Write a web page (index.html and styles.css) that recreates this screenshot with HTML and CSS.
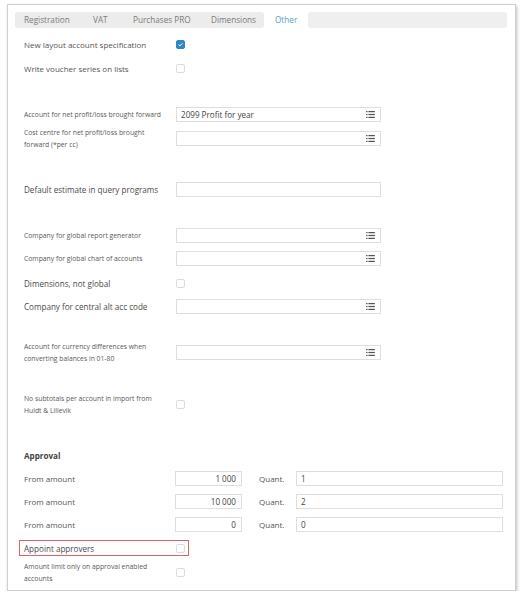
FILE: index.html
```html
<!DOCTYPE html>
<html>
<head>
<meta charset="utf-8">
<link rel="stylesheet" href="styles.css">
</head>
<body>
<div class="card">
  <div class="tabs">
    <div class="tabgroup">
      <span class="tab t-reg">Registration</span>
      <span class="tab t-vat">VAT</span>
      <span class="tab t-pur">Purchases PRO</span>
      <span class="tab t-dim">Dimensions</span>
    </div>
    <span class="tab active">Other</span>
    <div class="tabfill"></div>
  </div>

  <div class="row first">
    <span class="lbl md">New layout account specification</span>
    <span class="cb checked"><svg viewBox="0 0 10 10" width="9" height="9"><path d="M2.3 5.2 L4.2 7 L7.8 3.2" fill="none" stroke="#fff" stroke-width="1.4"/></svg></span>
  </div>
  <div class="row g1">
    <span class="lbl md">Write voucher series on lists</span>
    <span class="cb"></span>
  </div>

  <div class="row gap2">
    <span class="lbl sm">Account for net profit/loss brought forward</span>
    <div class="inp wide"><span class="val">2099 Profit for year</span><svg class="ico" viewBox="0 0 10 8" width="9" height="7"><rect x="0" y="0" width="1.6" height="1.4"/><rect x="2.6" y="0" width="7.4" height="1.4"/><rect x="0" y="3.3" width="1.6" height="1.4"/><rect x="2.6" y="3.3" width="7.4" height="1.4"/><rect x="0" y="6.6" width="1.6" height="1.4"/><rect x="2.6" y="6.6" width="7.4" height="1.4"/></svg></div>
  </div>
  <div class="row tall">
    <span class="lbl sm two">Cost centre for net profit/loss brought forward (*per cc)</span>
    <div class="inp wide"><span class="val"></span><svg class="ico" viewBox="0 0 10 8" width="9" height="7"><rect x="0" y="0" width="1.6" height="1.4"/><rect x="2.6" y="0" width="7.4" height="1.4"/><rect x="0" y="3.3" width="1.6" height="1.4"/><rect x="2.6" y="3.3" width="7.4" height="1.4"/><rect x="0" y="6.6" width="1.6" height="1.4"/><rect x="2.6" y="6.6" width="7.4" height="1.4"/></svg></div>
  </div>

  <div class="row gap3">
    <span class="lbl lg">Default estimate in query programs</span>
    <div class="inp wide"></div>
  </div>

  <div class="row gap2">
    <span class="lbl sm">Company for global report generator</span>
    <div class="inp wide"><span class="val"></span><svg class="ico" viewBox="0 0 10 8" width="9" height="7"><rect x="0" y="0" width="1.6" height="1.4"/><rect x="2.6" y="0" width="7.4" height="1.4"/><rect x="0" y="3.3" width="1.6" height="1.4"/><rect x="2.6" y="3.3" width="7.4" height="1.4"/><rect x="0" y="6.6" width="1.6" height="1.4"/><rect x="2.6" y="6.6" width="7.4" height="1.4"/></svg></div>
  </div>
  <div class="row">
    <span class="lbl sm">Company for global chart of accounts</span>
    <div class="inp wide"><span class="val"></span><svg class="ico" viewBox="0 0 10 8" width="9" height="7"><rect x="0" y="0" width="1.6" height="1.4"/><rect x="2.6" y="0" width="7.4" height="1.4"/><rect x="0" y="3.3" width="1.6" height="1.4"/><rect x="2.6" y="3.3" width="7.4" height="1.4"/><rect x="0" y="6.6" width="1.6" height="1.4"/><rect x="2.6" y="6.6" width="7.4" height="1.4"/></svg></div>
  </div>
  <div class="row g2">
    <span class="lbl lg">Dimensions, not global</span>
    <span class="cb"></span>
  </div>
  <div class="row">
    <span class="lbl lg">Company for central alt acc code</span>
    <div class="inp wide"><span class="val"></span><svg class="ico" viewBox="0 0 10 8" width="9" height="7"><rect x="0" y="0" width="1.6" height="1.4"/><rect x="2.6" y="0" width="7.4" height="1.4"/><rect x="0" y="3.3" width="1.6" height="1.4"/><rect x="2.6" y="3.3" width="7.4" height="1.4"/><rect x="0" y="6.6" width="1.6" height="1.4"/><rect x="2.6" y="6.6" width="7.4" height="1.4"/></svg></div>
  </div>

  <div class="row gap2b tall">
    <span class="lbl sm two">Account for currency differences when converting balances in 01-80</span>
    <div class="inp wide"><span class="val"></span><svg class="ico" viewBox="0 0 10 8" width="9" height="7"><rect x="0" y="0" width="1.6" height="1.4"/><rect x="2.6" y="0" width="7.4" height="1.4"/><rect x="0" y="3.3" width="1.6" height="1.4"/><rect x="2.6" y="3.3" width="7.4" height="1.4"/><rect x="0" y="6.6" width="1.6" height="1.4"/><rect x="2.6" y="6.6" width="7.4" height="1.4"/></svg></div>
  </div>

  <div class="row gap3b tall">
    <span class="lbl sm two">No subtotals per account in import from Huldt &amp; Lillevik</span>
    <span class="cb"></span>
  </div>

  <div class="row gap4 headrow">
    <span class="lbl head">Approval</span>
  </div>
  <div class="row">
    <span class="lbl md">From amount</span>
    <div class="inp amt">1 000</div>
    <span class="quant">Quant.</span>
    <div class="inp qty">1</div>
  </div>
  <div class="row">
    <span class="lbl md">From amount</span>
    <div class="inp amt">10 000</div>
    <span class="quant">Quant.</span>
    <div class="inp qty">2</div>
  </div>
  <div class="row">
    <span class="lbl md">From amount</span>
    <div class="inp amt">0</div>
    <span class="quant">Quant.</span>
    <div class="inp qty">0</div>
  </div>
  <div class="row hl-row">
    <span class="lbl lg">Appoint approvers</span>
    <span class="cb"></span>
    <div class="highlight"></div>
  </div>
  <div class="row tall last">
    <span class="lbl sm two">Amount limit only on approval enabled accounts</span>
    <span class="cb"></span>
  </div>
</div>
</body>
</html>
```

FILE: styles.css
```css
html, body {
  margin: 0;
  padding: 0;
  background: #ffffff;
}
body {
  font-family: "Open Sans", "Noto Sans", sans-serif;
  color: #555;
}
.card {
  margin: 4px 0 0 7px;
  width: 509px;
  height: 587px;
  box-sizing: border-box;
  border: 1px solid #cfcfcf;
  box-shadow: 1px 2px 3px rgba(0,0,0,0.25);
  padding: 7px 8px 0 7px;
  background: #fff;
}
.tabs {
  display: flex;
  height: 16px;
}
.tabgroup {
  display: flex;
  align-items: center;
  background: #ececec;
  border-radius: 3px;
  width: 249px;
  height: 16px;
  padding-left: 9px;
  box-sizing: border-box;
}
.tab {
  font-size: 8.2px;
  color: #7a7a7a;
  line-height: 16px;
  flex: none;
}
.t-reg { width: 69px; }
.t-vat { width: 40px; }
.t-pur { width: 78px; }
.t-dim { width: auto; }
.tab.active {
  width: 44px;
  box-sizing: border-box;
  padding-left: 11px;
  color: #5b9fc5;
}
.tabfill {
  flex: 1;
  background: #efefef;
  border-radius: 3px;
  height: 16px;
}
.row {
  display: flex;
  align-items: center;
  height: 23px;
  padding-left: 9px;
  position: relative;
}
.row.first { margin-top: 5px; }
.row.tall { height: 25px; }
.row.g1 { margin-top: 1px; }
.row.g2 { margin-top: 2px; }
.row.gap2 { margin-top: 23px; }
.row.gap2b { margin-top: 22px; }
.row.gap3 { margin-top: 27px; }
.row.gap3b { margin-top: 27px; }
.row.gap4 { margin-top: 26px; }
.row.headrow { height: 24px; }
.lbl {
  width: 152px;
  flex: none;
  color: #555;
}
.lbl.lg { font-size: 8.1px; color: #4a4a4a; }
.lbl.md { font-size: 8px; color: #555; }
.lbl.sm { font-size: 6.8px; color: #5a5a5a; line-height: 12px; }
.lbl.two { width: 130px; margin-right: 22px; }
.lbl.head { font-size: 8.1px; font-weight: bold; color: #444; }
.cb {
  width: 9px;
  height: 9px;
  box-sizing: border-box;
  border: 1px solid #dcdcdc;
  border-radius: 2px;
  background: #fff;
  display: flex;
  align-items: center;
  justify-content: center;
}
.cb.checked {
  background: #2f87c4;
  border-color: #2f87c4;
}
.cb.checked svg { display: block; }
.inp {
  height: 15px;
  box-sizing: border-box;
  border: 1px solid #dedede;
  background: #fff;
  display: flex;
  align-items: center;
  font-size: 8.1px;
  color: #444;
}
.inp.wide {
  width: 205px;
  padding: 0 5px 0 4px;
  justify-content: space-between;
}
.inp.amt {
  width: 67px;
  margin-left: -1px;
  justify-content: flex-end;
  padding-right: 5px;
}
.inp.qty {
  width: 207px;
  padding-left: 4px;
}
.quant {
  font-size: 8px;
  color: #555;
  width: 54px;
  padding-left: 17px;
  box-sizing: border-box;
  flex: none;
}
.ico { fill: #555; margin-left: auto; }
.hl-row { height: 24px; }
.highlight {
  position: absolute;
  left: 4px;
  top: 4px;
  width: 170px;
  height: 16px;
  box-sizing: border-box;
  border: 1px solid #d9666b;
}
```
